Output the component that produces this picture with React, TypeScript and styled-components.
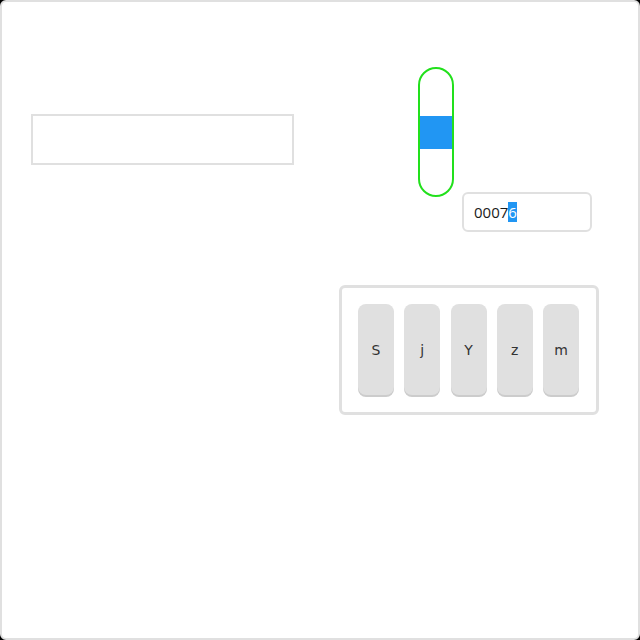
import React from "react";
import styled, { createGlobalStyle } from "styled-components";

const Global = createGlobalStyle`
  html, body { margin: 0; padding: 0; background: #000; }
  * { box-sizing: border-box; }
`;

const Panel = styled.div`
  width: 640px;
  height: 640px;
  background: #fff;
  border: 2px solid #e0e0e0;
  border-radius: 6px;
  display: flex;
  align-items: flex-start;
`;

const LeftCol = styled.div`
  padding: 112px 0 0 29px;
`;

const TextBox = styled.div`
  width: 263px;
  height: 51px;
  border: 2px solid #e0e0e0;
  background: #fff;
`;

const RightCol = styled.div`
  margin-left: 45px;
  padding-top: 65px;
  display: flex;
  flex-direction: column;
  align-items: flex-start;
`;

const Pill = styled.div`
  margin-left: 79px;
  width: 36px;
  height: 130px;
  border: 2px solid #22e01c;
  border-radius: 18px;
  overflow: hidden;
  display: flex;
  flex-direction: column;
`;

const PillFill = styled.div`
  margin-top: 47px;
  height: 33px;
  background: #2196f3;
`;

const NumberField = styled.div`
  margin-left: 123px;
  margin-top: -5px;
  width: 130px;
  height: 40px;
  border: 2px solid #e0e0e0;
  border-radius: 6px;
  padding-left: 10px;
  display: flex;
  align-items: center;
  font-family: "Open Sans", "Liberation Sans", sans-serif;
  font-size: 15px;
  color: #1a1a1a;
`;

const Selected = styled.span`
  background: #2196f3;
  color: #fff;
`;

const Keyboard = styled.div`
  margin-top: 53px;
  width: 260px;
  height: 130px;
  border: 3px solid #e0e0e0;
  border-radius: 6px;
  display: flex;
  justify-content: space-between;
  align-items: flex-start;
  padding: 16px 17px 0 16px;
`;

const Key = styled.div`
  width: 36px;
  height: 91px;
  background: #e0e0e0;
  border-radius: 8px;
  box-shadow: 0 2px 0 #cccccc;
  display: flex;
  align-items: center;
  justify-content: center;
  font-family: "DejaVu Sans", sans-serif;
  font-size: 14px;
  color: #333;
`;

const keys = ["S", "j", "Y", "z", "m"];

export default function App() {
  return (
    <>
      <Global />
      <Panel>
        <LeftCol>
          <TextBox />
        </LeftCol>
        <RightCol>
          <Pill>
            <PillFill />
          </Pill>
          <NumberField>
            0007<Selected>6</Selected>
          </NumberField>
          <Keyboard>
            {keys.map((k) => (
              <Key key={k}>{k}</Key>
            ))}
          </Keyboard>
        </RightCol>
      </Panel>
    </>
  );
}
